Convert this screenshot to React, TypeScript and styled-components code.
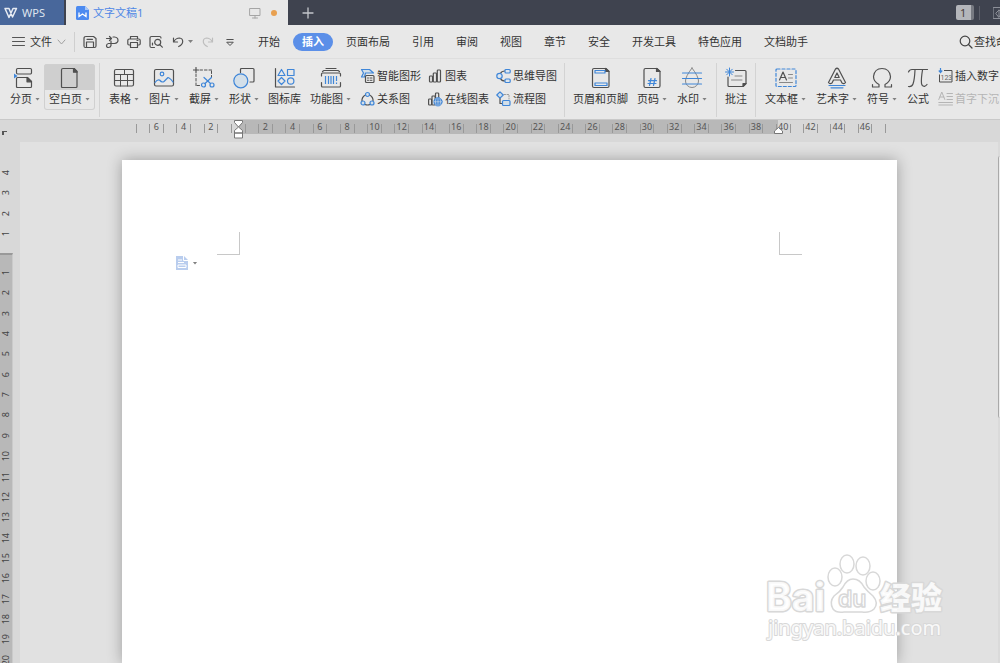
import React from "react";
import styled, { createGlobalStyle, css } from "styled-components";

const BLUE = "#3f86d8";
const INK = "#505050";

const GlobalStyle = createGlobalStyle`
  *, *::before, *::after { box-sizing: border-box; }
  html, body { margin: 0; height: 100%; overflow: hidden; }
  body { font: 11px/16px "Noto Sans", "Noto Sans CJK SC", sans-serif; color: #333; background: #e1e1e1; }
  button, input { font: inherit; color: inherit; }
  button { margin: 0; padding: 0; border: 0; background: none; white-space: nowrap; }
  svg { display: block; flex: none; }
`;

const Window = styled.div`
  display: flex;
  flex-direction: column;
  height: 100vh;
  overflow: hidden;
  position: relative;
`;

/* ---------- title bar ---------- */
const TitleBar = styled.header`
  display: flex;
  height: 25px;
  flex: none;
  background: #3f434f;
  overflow: hidden;
`;
const HomeTab = styled.button`
  display: flex;
  align-items: center;
  gap: 4px;
  width: 66px;
  padding-left: 4px;
  background: #48679b;
  border-right: 2px solid #3f434f;
  color: #dfe5ef;
`;
const DocTab = styled.div`
  display: flex;
  align-items: center;
  gap: 4px;
  width: 222px;
  padding: 0 11px 0 10px;
  background: #e8e8e8;
  color: #4f87e6;
`;
const TabTitle = styled.span`
  flex: 1;
`;
const Dot = styled.span`
  width: 6px;
  height: 6px;
  margin-left: 6px;
  border-radius: 50%;
  background: #e8a050;
`;
const NewTab = styled.button`
  display: grid;
  place-items: center;
  width: 40px;
`;
const TitleRight = styled.div`
  display: flex;
  align-items: center;
  margin-left: auto;
  width: 44px;
  flex: none;
`;
const Count = styled.span`
  flex: none;
  width: 18px;
  height: 15px;
  border-radius: 2px;
  background: linear-gradient(90deg, #b4b6bb 15px, #777a82 15px);
  color: #4a4038;
  line-height: 15px;
  padding-left: 4px;
`;
const TitleRule = styled.span`
  flex: none;
  width: 1px;
  height: 14px;
  margin: 0 13px 0 5px;
  background: #5d606b;
`;

/* ---------- menu row ---------- */
const MenuBar = styled.nav`
  display: flex;
  align-items: center;
  height: 34px;
  flex: none;
  padding-left: 12px;
  background: #e8e8e8;
  border-bottom: 1px solid #dedede;
  overflow: hidden;
`;
const FileButton = styled.button`
  display: flex;
  align-items: center;
  gap: 5px;
  width: 63px;
  height: 20px;
  border-right: 1px solid #cfcfcf;
`;
const QuickAccess = styled.div`
  display: flex;
  align-items: center;
  gap: 8px;
  width: 183px;
  flex: none;
  padding-left: 8px;
`;
const QuickButton = styled.button`
  display: flex;
  align-items: center;
  gap: 3px;
`;
const Tabs = styled.div`
  display: flex;
  align-items: center;
  gap: 22px;
  flex: none;
`;
const Tab = styled.button<{ $active?: boolean }>`
  height: 18px;
  line-height: 18px;
  ${(p) =>
    p.$active &&
    css`
      margin: 0 -9px;
      padding: 0 9px;
      border-radius: 9px;
      background: #5b8fe8;
      color: #fff;
      font-weight: 700;
    `}
`;
const Search = styled.button`
  display: flex;
  align-items: center;
  gap: 1px;
  width: 41px;
  margin-left: auto;
  flex: none;
`;

/* ---------- ribbon ---------- */
const Ribbon = styled.section`
  display: flex;
  height: 61px;
  flex: none;
  padding: 4px 0 2px 6px;
  background: #e8e8e8;
  border-bottom: 1px solid #c9c9c9;
  overflow: hidden;
`;
const Big = styled.button<{ $pad?: number; $active?: boolean }>`
  display: flex;
  flex: none;
  flex-direction: column;
  align-items: center;
  gap: 2px;
  height: 46px;
  margin-top: 1px;
  padding: 3px ${(p) => p.$pad ?? 5}px 0;
  border-radius: 3px;
  ${(p) =>
    p.$active &&
    css`
      background: linear-gradient(#cfcfcf 26px, #e8e8e8 26px);
      box-shadow: inset 0 0 0 1px #d0d0d0;
    `}
`;
const Caption = styled.span`
  display: flex;
  align-items: center;
  gap: 3px;
`;
const Arrow = styled.i`
  width: 5px;
  height: 3px;
  background: #808080;
  clip-path: polygon(0 0, 100% 0, 50% 100%);
`;
const Separator = styled.span`
  flex: none;
  width: 1px;
  height: 54px;
  margin: 0 4px;
  background: #d3d3d3;
`;
const SmallGroup = styled.div`
  display: grid;
  grid-template-rows: 23px 23px;
  grid-auto-flow: column;
  grid-auto-columns: 61px;
  column-gap: 7px;
  flex: none;
  margin: 1px 3px 0 4px;
`;
const Small = styled.button`
  display: flex;
  align-items: center;
  gap: 2px;
  &:disabled { color: #b5b5b5; }
`;

/* ---------- rulers and workspace ---------- */
const HRuler = styled.div`
  position: relative;
  display: flex;
  justify-content: center;
  height: 22px;
  flex: none;
  padding-left: 21px;
  background: #d8d8d8;
`;
const TabStop = styled.span`
  position: absolute;
  left: 2px;
  top: 11px;
  width: 5px;
  height: 4px;
  border-left: 2px solid #555;
  border-top: 1px solid #555;
`;
const Scale = styled.div`
  position: relative;
  display: flex;
  width: 750px;
  height: 14px;
  flex: none;
  padding-top: 4px;
  background: linear-gradient(90deg, transparent 102px, #b8b8b8 102px, #b8b8b8 642px, transparent 642px);
`;
const Unit = styled.span`
  flex: 1 1 0;
  min-width: 0;
  height: 9px;
  border-left: 1px solid #999;
  display: flex;
  justify-content: center;
  font-size: 9px;
  line-height: 6px;
  color: #555;
  &:last-of-type { border-right: 1px solid #999; }
`;
const Marker = styled.svg<{ $left: number; $top: number }>`
  position: absolute;
  left: ${(p) => p.$left}px;
  top: ${(p) => p.$top}px;
`;
const Body = styled.div`
  display: flex;
  flex: 1;
  min-height: 0;
`;
const VRuler = styled.div`
  width: 20px;
  flex: none;
  padding-top: 21px;
  background: #d8d8d8;
  overflow: hidden;
`;
const VScale = styled.div<{ $count: number; $height: number }>`
  display: grid;
  grid-template-rows: repeat(${(p) => p.$count}, 1fr);
  height: ${(p) => p.$height}px;
  width: 12px;
`;
const VInside = styled.div`
  width: 13px;
  margin-top: 9px;
  padding-top: 8px;
  border-top: 2px solid #999;
  border-right: 1px solid #cacaca;
  background: #b8b8b8;
`;
const VNumber = styled.span`
  display: grid;
  place-items: center;
  writing-mode: vertical-rl;
  transform: rotate(180deg);
  font-size: 9px;
  line-height: 12px;
  color: #444;
`;
const Workspace = styled.main`
  display: flex;
  justify-content: center;
  flex: 1;
  min-width: 0;
  padding-top: 18px;
  background: #e1e1e1;
  overflow: hidden;
`;
const Sheet = styled.article`
  position: relative;
  width: 775px;
  flex: none;
  background: #fff;
  box-shadow: 0 0 14px rgba(0, 0, 0, 0.3);
`;
const Crop = styled.span<{ $side: "left" | "right" }>`
  position: absolute;
  top: 72px;
  ${(p) => p.$side}: 95px;
  width: 23px;
  height: 23px;
  border-bottom: 1px solid #c8c8c8;
  border-${(p) => (p.$side === "left" ? "right" : "left")}: 1px solid #c8c8c8;
`;
const PasteHint = styled.button`
  position: absolute;
  left: 54px;
  top: 96px;
  display: flex;
  align-items: center;
  gap: 5px;
`;
const ScrollTrack = styled.div`
  width: 2px;
  flex: none;
  padding-top: 14px;
  background: #dadada;
`;
const ScrollThumb = styled.div`
  height: 262px;
  border-left: 1px solid #a9a9a9;
  background: #ececec;
  border-radius: 2px 0 0 2px;
`;
const Watermark = styled.svg`
  position: absolute;
  right: 52px;
  bottom: 18px;
`;

/* ---------- icons ---------- */
type IconProps = { w?: number; h?: number; c?: string; sw?: number; children: React.ReactNode };
const Icon = ({ w = 22, h = 22, c = INK, sw = 1.2, children }: IconProps) => (
  <svg width={w} height={h} viewBox={`0 0 ${w} ${h}`} fill="none" stroke={c} strokeWidth={sw} strokeLinejoin="round" strokeLinecap="round" aria-hidden="true">
    {children}
  </svg>
);

const icons = {
  split: (
    <Icon>
      <rect x="2.5" y="1.5" width="15" height="5.5" rx="1.2" />
      <path d="M2.5 19.5v-8q0-1 1-1h10l4 4v5q0 1-1 1h-13q-1 0-1-1z" />
      <path d="M13 10.5v4.300h4.500z" fill={INK} />
      <path d="M0 6.500v5l3.500-2.500z" fill={BLUE} stroke="none" />
    </Icon>
  ),
  blank: (
    <Icon>
      <path d="M2.500 19.500V3q0-1.500 1.500-1.500h11l3 3v15q0 1-1 1H3.500q-1 0-1-1z" />
      <path d="M14.500 1.500H15l3 3v.7h-3.500z" fill={INK} />
    </Icon>
  ),
  table: (
    <Icon>
      <rect x="1.5" y="2.5" width="19" height="16.5" rx="1.5" />
      <path d="M1.500 7.500h19M1.500 13.500h19M7.500 7.500v6M14.500 7.500v6M11.500 2.500v5M7.500 13.500V19M14.500 13.500V19" strokeWidth="1" />
    </Icon>
  ),
  picture: (
    <Icon>
      <rect x="1.5" y="2.5" width="19" height="16.5" rx="1.5" />
      <g stroke={BLUE}>
        <circle cx="9" cy="7" r="1.800" />
        <path d="M2 15.500q2.500-3.500 4.500-2.500 2.500 3 4.500 1.500l4-4q2 .500 5 4.500" />
      </g>
    </Icon>
  ),
  screenshot: (
    <Icon>
      <path d="M3 .5v5M.5 3h5" />
      <path d="M3 7v12M7 3h11.500M18.500 4v6M4 18.500h4" strokeDasharray="2.500 2" strokeWidth="1" />
      <g stroke={BLUE}>
        <circle cx="10.500" cy="18" r="2" />
        <circle cx="19" cy="18" r="2" />
        <path d="M12 16.500l6.500-6M17.500 16.500l-6.500-6" />
      </g>
    </Icon>
  ),
  shapes: (
    <Icon>
      <path d="M7.500 5.500v-3q0-1 1-1h11.500q1 0 1 1V14q0 1-1 1h-3" />
      <circle cx="7.800" cy="13.800" r="7" fill="#d3dfe9" stroke={BLUE} />
    </Icon>
  ),
  library: (
    <Icon>
      <path d="M1.500 1.500v18.500h19" />
      <g stroke={BLUE}>
        <path d="M7.500 2.500l3.500 6H4z" />
        <rect x="13.500" y="2.500" width="6.500" height="6" />
        <path d="M7.500 10.500l3.500 3.500-3.500 3.500L4 14z" />
        <circle cx="16.700" cy="14" r="3.200" />
      </g>
    </Icon>
  ),
  feature: (
    <Icon>
      <path d="M6 1.500h10M2.500 4.500L4 3.500h14l1.500 1M1.500 9V7q0-1 1-1h17q1 0 1 1v2M1.500 15.500v3.500q0 1 1 1h17q1 0 1-1v-3.500" />
      <path d="M5.500 9v8M8.500 9v8M11 9v8M13.500 9v8M16.500 9v5M16.500 15.500v1.500" stroke={BLUE} strokeLinecap="butt" />
    </Icon>
  ),
  headerFooter: (
    <Icon>
      <path d="M2.500 19V3q0-1.500 1.500-1.500h12l3 3V19q0 1.500-1.500 1.500H4q-1.500 0-1.500-1.500z" />
      <path d="M15.500 1.500v3H19z" fill={INK} />
      <g stroke={BLUE}>
        <rect x="5" y="3.500" width="10" height="2.500" />
        <rect x="5" y="16" width="12" height="2.500" />
      </g>
    </Icon>
  ),
  pageNumber: (
    <Icon>
      <path d="M3 19V3q0-1.500 1.500-1.500H16l3 3V19q0 1.500-1.500 1.500h-13Q3 20.500 3 19z" />
      <path d="M15.500 1.500v3H19z" fill={INK} />
      <path d="M10 11.500l-1.500 7M14 11.500l-1.500 7M7.500 13.700h8M7 16.500h8" stroke={BLUE} />
    </Icon>
  ),
  watermark: (
    <Icon>
      <path d="M11 1Q4.500 9.500 4.500 14a6.500 6.500 0 0 0 13 0Q17.500 9.500 11 1z" stroke="#888" strokeWidth="1" />
      <path d="M1.500 6h19M1.500 11.500h19M1.500 17h19" stroke={BLUE} />
    </Icon>
  ),
  comment: (
    <Icon>
      <path d="M10.500 3.500h9.500q1 0 1 1V16.500l-3 3H4q-1 0-1-1V10" />
      <path d="M21 16.500h-3v3z" fill={INK} />
      <path d="M10 9h7M6.500 13h10.500" stroke="#888" strokeWidth="1" />
      <path d="M4.500 1v8M.5 5h8M1.700 2.200l5.600 5.600M7.300 2.200L1.700 7.800" stroke={BLUE} strokeWidth="1" />
    </Icon>
  ),
  textBox: (
    <Icon>
      <rect x="1" y="2" width="20" height="17.500" rx="1" stroke={BLUE} strokeDasharray="3 2" />
      <path d="M4.500 13l3.500-8 3.500 8M6 10.500h4" />
      <path d="M13.500 7.500h4M13.500 11h4M4.500 15.500h13" stroke="#888" strokeWidth="1" />
    </Icon>
  ),
  wordArt: (
    <Icon>
      <path d="M2.500 15.500L9.500 2q1.500-1.500 3 0l7 13.500q-1.500 2-3.500.5l-1.500-3h-7L6 16q-2 1.500-3.500-.5z" />
      <path d="M11 6l2.200 4.500H8.800z" />
      <path d="M3 18.500h16M5 20.800h12" stroke={BLUE} />
    </Icon>
  ),
  omega: (
    <Icon>
      <path d="M1.500 17.500V20h6.500v-2.500Q2.500 14.500 2.500 9.500 3.500 1.500 11 1.500t8.500 8q0 5-5.500 8V20h6.500v-2.500" />
    </Icon>
  ),
  pi: (
    <Icon>
      <path d="M1.500 5q1-2.500 3.500-2.500h15.500M8 3q-.5 10-2 14Q5 20 1.500 19.500M15.500 3q-1.500 9-1 13.500.5 3 3 2.800 1.500-.3 2.500-1.800" />
    </Icon>
  ),
};

const small = {
  smart: (
    <Icon w={15} h={16}>
      <path d="M1.500 1.500h8l4 3.500H5.500l-1 4h-3l2-4z" stroke={BLUE} fill="#d3dfe9" />
      <rect x="5.500" y="7.500" width="8.500" height="7" rx="1" fill="#e8e8e8" />
      <path d="M7.500 10h1M10 10h2M7.500 12.300h1M10 12.300h2" strokeWidth="1" />
    </Icon>
  ),
  relation: (
    <Icon w={15} h={16}>
      <path d="M5.500 4Q1.500 6 2 10.500M9.500 4q4 2 3.500 6.500M5 13.500q2.500 1 5 0" />
      <g stroke={BLUE} fill="#d3dfe9">
        <circle cx="7.500" cy="3.500" r="2" />
        <circle cx="3" cy="12" r="2" />
        <circle cx="12" cy="12" r="2" />
      </g>
    </Icon>
  ),
  chart: (
    <Icon w={15} h={16}>
      <rect x="1.500" y="8" width="3" height="6" rx=".8" />
      <rect x="5.300" y="5" width="3.200" height="9" rx=".8" />
      <rect x="9.300" y="2" width="3.200" height="12" rx=".8" />
    </Icon>
  ),
  onlineChart: (
    <Icon w={15} h={16}>
      <rect x=".6" y="8" width="3" height="6" rx=".8" />
      <rect x="4" y="5" width="3.200" height="9" rx=".8" />
      <rect x="7.500" y="2" width="3.200" height="8" rx=".8" />
      <circle cx="10" cy="10.800" r="4.200" fill={BLUE} stroke={BLUE} strokeWidth=".8" />
      <path d="M6 10.800h8M10 7v7.600M8 7.500q-1.500 3.300 0 6.600M12 7.500q1.500 3.300 0 6.600" stroke="#e8e8e8" strokeWidth=".6" />
    </Icon>
  ),
  mind: (
    <Icon w={15} h={16}>
      <path d="M4.500 5.500q1-2.500 4.500-2.500M4.500 10.500q1 2.500 4.500 2.500" />
      <g stroke={BLUE} fill="#dde6ee">
        <circle cx="3.500" cy="8" r="2.700" />
        <rect x="9" y="1.500" width="5.200" height="3.500" rx="1" />
        <rect x="9" y="11" width="5.200" height="3.500" rx="1" />
      </g>
    </Icon>
  ),
  flow: (
    <Icon w={15} h={16}>
      <path d="M4 7v5.500h2.500" />
      <path d="M8 3.500h5V8" stroke="#999" strokeDasharray="1.500 1.500" strokeWidth="1" />
      <g stroke={BLUE} fill="#d3dfe9">
        <path d="M4 .8L7.200 4 4 7.200.8 4z" />
        <rect x="6.500" y="9.500" width="7.500" height="5" rx="1" />
      </g>
    </Icon>
  ),
  number: (
    <svg width="15" height="16" viewBox="0 0 15 16" fill="none" stroke={INK} aria-hidden="true">
      <path d="M6 2.500h8V14H1.500V6.500" />
      <path d="M2.500 0v4M.8 2.500l1.700 2 1.700-2" stroke={BLUE} strokeWidth="1.200" />
      <text x="2.500" y="11.500" fontSize="7" fontFamily="Roboto" fill="#666" stroke="none">123</text>
    </svg>
  ),
  dropCap: (
    <Icon w={15} h={16} c="#b5b5b5" sw={1}>
      <path d="M.8 8.500l3-7.500 3 7.500M2 6h3.800M9 2.500h5.500M9 5.500h5.500M9 8.500h5.500M.8 11.500h13.700M.8 14h13.700" />
    </Icon>
  ),
};

const quick = {
  save: (
    <Icon w={14} h={14}>
      <path d="M1 11V3.500Q1 1.500 3 1.500h7.500l2.500 2V11q0 1.500-1.500 1.500h-9Q1 12.500 1 11zM3.500 12.500V7h7v5.500M4 4.300h5.500" />
    </Icon>
  ),
  pdf: (
    <Icon w={14} h={14}>
      <path d="M1.500 3.500h5M4.500 1.500l2 2-2 2M8 2h1.500q3.500.5 3.500 3.200T9.500 8.500H7M6 6v4.500Q5.500 12.500 3.500 12.500T1.500 10.700 3.500 8.500H7" />
    </Icon>
  ),
  print: (
    <Icon w={14} h={14}>
      <path d="M3.500 4V1.500h7V4M3.500 10H2Q.8 10 .8 8.800V5.500Q.8 4 2.300 4h9.400q1.500 0 1.500 1.500v3.300q0 1.200-1.200 1.200h-1.500M3.500 7.500h7v5h-7zM10 5.500h1" />
    </Icon>
  ),
  preview: (
    <Icon w={14} h={14}>
      <path d="M5.500 12.500h-3Q1 12.500 1 11V3q0-1.500 1.500-1.500h8Q12 1.500 12 3M3.500 10V8" />
      <circle cx="8.700" cy="7.300" r="3" />
      <path d="M11 9.800l2.300 2.400" />
    </Icon>
  ),
  undo: (
    <Icon w={14} h={14}>
      <path d="M2.500 3v4h4M2.800 6.500Q5 3 8.500 3q3.200.3 3.200 3.500 0 3-4 5" />
    </Icon>
  ),
  redo: (
    <Icon w={14} h={14} c="#bdbdbd">
      <path d="M11.500 3v4h-4M11.200 6.500Q9 3 5.500 3q-3.200.3-3.200 3.500 0 3 4 5" />
    </Icon>
  ),
  more: (
    <Icon w={14} h={14} sw={1}>
      <path d="M3.800 4.500h6.400M4 7.500l3 3 3-3z" />
    </Icon>
  ),
};

/* ---------- data ---------- */
type BigItem = { label: string; icon: React.ReactNode; menu?: boolean; pad?: number; active?: boolean };
const pageTools: BigItem[] = [
  { label: "分页", icon: icons.split, menu: true, pad: 4 },
  { label: "空白页", icon: icons.blank, menu: true, active: true },
];
const insertTools: BigItem[] = [
  { label: "表格", icon: icons.table, menu: true },
  { label: "图片", icon: icons.picture, menu: true },
  { label: "截屏", icon: icons.screenshot, menu: true },
  { label: "形状", icon: icons.shapes, menu: true },
  { label: "图标库", icon: icons.library, pad: 4 },
  { label: "功能图", icon: icons.feature, menu: true },
];
const headerTools: BigItem[] = [
  { label: "页眉和页脚", icon: icons.headerFooter, pad: 4 },
  { label: "页码", icon: icons.pageNumber, menu: true },
  { label: "水印", icon: icons.watermark, menu: true },
];
const commentTools: BigItem[] = [{ label: "批注", icon: icons.comment, pad: 4 }];
const textTools: BigItem[] = [
  { label: "文本框", icon: icons.textBox, menu: true },
  { label: "艺术字", icon: icons.wordArt, menu: true },
  { label: "符号", icon: icons.omega, menu: true },
  { label: "公式", icon: icons.pi, pad: 5 },
];
const graphTools = [
  { label: "智能图形", icon: small.smart },
  { label: "关系图", icon: small.relation },
  { label: "图表", icon: small.chart },
  { label: "在线图表", icon: small.onlineChart },
  { label: "思维导图", icon: small.mind },
  { label: "流程图", icon: small.flow },
];
const tabs = ["开始", "插入", "页面布局", "引用", "审阅", "视图", "章节", "安全", "开发工具", "特色应用", "文档助手"];

const BigTools = ({ items }: { items: BigItem[] }) => (
  <>
    {items.map((t) => (
      <Big key={t.label} $pad={t.pad} $active={t.active}>
        {t.icon}
        <Caption>
          {t.label}
          {t.menu && <Arrow />}
        </Caption>
      </Big>
    ))}
  </>
);

const rulerLabel = (i: number) => {
  const n = Math.abs(i - 7);
  return i % 2 === 1 && n > 0 ? n : null;
};

export default function App() {
  return (
    <Window>
      <GlobalStyle />
      <TitleBar>
        <HomeTab>
          <Icon w={14} h={12} c="#e6ebf3" sw={1.5}>
            <path d="M1 1.500h4l3.500 8.500L12.500 1.500H9L5 10.500 1 1.500" />
          </Icon>
          WPS
        </HomeTab>
        <DocTab>
          <svg width="13" height="14" viewBox="0 0 13 14" aria-hidden="true">
            <path d="M1.500 0H9l4 4v8.500q0 1.500-1.500 1.500h-10Q0 14 0 12.500v-11Q0 0 1.500 0z" fill="#4c8af0" />
            <path d="M9 0v4h4z" fill="#a9c8f7" />
            <path d="M3 6.500v4l3.500-2.500L10 10.500v-4" fill="none" stroke="#fff" strokeWidth="1.300" />
          </svg>
          <TabTitle>文字文稿1</TabTitle>
          <Icon w={12} h={12} c="#a5a5a5" sw={1}>
            <path d="M1 1.500h10v7H1zM6 8.500v2.500M3.500 11H8.500" />
          </Icon>
          <Dot />
        </DocTab>
        <NewTab aria-label="新建">
          <Icon w={12} h={12} c="#c4c6cb" sw={1.3}>
            <path d="M6 1v10M1 6h10" />
          </Icon>
        </NewTab>
        <TitleRight>
          <Count>1</Count>
          <TitleRule />
          <Icon w={12} h={12} c="#8d9099" sw={1}>
            <path d="M.5.5h11v11H.5zM3 6l3-3 3 3-3 4zM6 3v7" />
          </Icon>
        </TitleRight>
      </TitleBar>

      <MenuBar>
        <FileButton>
          <Icon w={13} h={10} c="#555" sw={1}>
            <path d="M.5.5h12M.5 4.500h12M.5 8.500h12" />
          </Icon>
          文件
          <Icon w={9} h={6} c="#a0a0a0" sw={1}>
            <path d="M1 1l3.500 4L8 1" />
          </Icon>
        </FileButton>
        <QuickAccess>
          <QuickButton aria-label="保存">{quick.save}</QuickButton>
          <QuickButton aria-label="输出为PDF">{quick.pdf}</QuickButton>
          <QuickButton aria-label="打印">{quick.print}</QuickButton>
          <QuickButton aria-label="打印预览">{quick.preview}</QuickButton>
          <QuickButton aria-label="撤销">
            {quick.undo}
            <Arrow />
          </QuickButton>
          <QuickButton aria-label="恢复">{quick.redo}</QuickButton>
          <QuickButton aria-label="更多">{quick.more}</QuickButton>
        </QuickAccess>
        <Tabs>
          {tabs.map((t) => (
            <Tab key={t} $active={t === "插入"}>
              {t}
            </Tab>
          ))}
        </Tabs>
        <Search>
          <Icon w={14} h={14} c="#444">
            <circle cx="6" cy="6" r="4.800" />
            <path d="M9.500 9.500l3.500 3.500" />
          </Icon>
          查找命令
        </Search>
      </MenuBar>

      <Ribbon>
        <BigTools items={pageTools} />
        <Separator />
        <BigTools items={insertTools} />
        <SmallGroup>
          {graphTools.map((t) => (
            <Small key={t.label}>
              {t.icon}
              {t.label}
            </Small>
          ))}
        </SmallGroup>
        <Separator />
        <BigTools items={headerTools} />
        <Separator />
        <BigTools items={commentTools} />
        <Separator />
        <BigTools items={textTools} />
        <SmallGroup>
          <Small>
            {small.number}
            插入数字
          </Small>
          <Small disabled>
            {small.dropCap}
            首字下沉
          </Small>
        </SmallGroup>
      </Ribbon>

      <HRuler>
        <TabStop />
        <Scale>
          {Array.from({ length: 55 }, (_, i) => (
            <Unit key={i}>{rulerLabel(i)}</Unit>
          ))}
          <Marker $left={98} $top={0} width="9" height="19" viewBox="0 0 9 19" fill="#fff" stroke="#777">
            <path d="M.5.5h8v2L4.500 7l-4-4.500zM.5 13v-2.500l4-3.500 4 3.500V13zM.5 13h8v5h-8z" />
          </Marker>
          <Marker $left={638} $top={7} width="9" height="7" viewBox="0 0 9 7" fill="#fff" stroke="#777">
            <path d="M.5 6.500V4l4-3.500 4 3.500v2.500z" />
          </Marker>
        </Scale>
      </HRuler>

      <Body>
        <VRuler>
          <VScale $count={4} $height={81}>
            {[4, 3, 2, 1].map((n) => (
              <VNumber key={n}>{n}</VNumber>
            ))}
          </VScale>
          <VInside>
            <VScale $count={20} $height={407}>
              {Array.from({ length: 20 }, (_, i) => (
                <VNumber key={i}>{i + 1}</VNumber>
              ))}
            </VScale>
          </VInside>
        </VRuler>
        <Workspace>
          <Sheet>
            <Crop $side="left" />
            <Crop $side="right" />
            <PasteHint aria-label="粘贴选项">
              <svg width="12" height="14" viewBox="0 0 12 14" aria-hidden="true">
                <path d="M0 0h8l4 4v10H0z" fill="#b9cdee" />
                <path d="M7.500 0v4.500H12M2 4h4M2 6.500h6M2 9h8v2.500H2z" fill="none" stroke="#fff" strokeWidth="1" />
              </svg>
              <Arrow />
            </PasteHint>
          </Sheet>
        </Workspace>
        <ScrollTrack>
          <ScrollThumb />
        </ScrollTrack>
      </Body>

      <Watermark width="184" height="92" viewBox="0 0 184 92" fill="#fff" stroke="#d8d8d8" strokeWidth="1.500" strokeLinejoin="round" fillOpacity="0.85" aria-label="Baidu 经验">
        <g paintOrder="stroke" strokeWidth="3">
          <text x="2" y="58" fontFamily="Inter" fontWeight="700" fontSize="39">Bai</text>
          <text x="116" y="56" fontFamily="Noto Sans CJK SC" fontWeight="900" fontSize="31">经验</text>
          <text x="4" y="82" fontFamily="Noto Sans" fontSize="20" strokeWidth="2">jingyan.baidu.com</text>
        </g>
        <ellipse cx="71" cy="24" rx="7" ry="9" />
        <ellipse cx="83" cy="11" rx="7" ry="9" />
        <ellipse cx="99" cy="13" rx="7" ry="9" />
        <ellipse cx="109" cy="28" rx="7" ry="9" />
        <path d="M89 26q7 0 11 8 4 5 9 9 6 7 1 13-4 4-12 3H80q-8 1-11-3-4-7 1-13 6-4 9-9 4-8 10-8z" />
        <text x="74" y="54" fontFamily="Inter" fontWeight="600" fontSize="23">du</text>
      </Watermark>
    </Window>
  );
}
